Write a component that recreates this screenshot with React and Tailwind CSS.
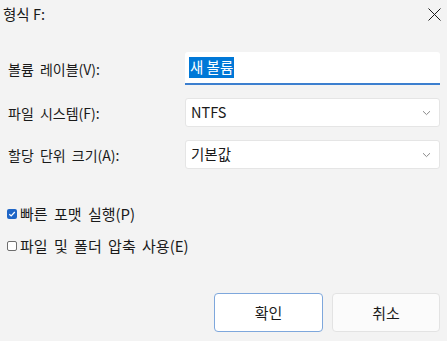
import React from 'react';

const font = { fontFamily: "'Noto Sans CJK KR', 'Noto Sans', sans-serif" };

// small chevron used by the combo boxes
const Chevron = () => (
  <svg width="9" height="6" viewBox="0 0 9 6" className="text-[#8a8a8a]">
    <path d="M1 1.2 L4.5 4.6 L8 1.2" fill="none" stroke="currentColor" strokeWidth="1" />
  </svg>
);

const Combo = ({ value }) => (
  <div className="flex h-[29px] w-[255px] items-center justify-between rounded-[3px] border border-[#e5e5e5] bg-white pl-[5px] pr-[8px] text-[14.5px] text-[#1a1a1a]">
    <span>{value}</span>
    <Chevron />
  </div>
);

const Row = ({ label, children }) => (
  <div className="flex items-center">
    <div className="w-[177px] text-[#1a1a1a] [word-spacing:3px]">{label}</div>
    {children}
  </div>
);

const Checkbox = ({ checked, label }) => (
  <div className="flex items-center gap-[3px] text-[15px] text-[#1a1a1a] [word-spacing:3px]">
    {checked ? (
      <span className="flex h-[10px] w-[10px] items-center justify-center rounded-[2px] bg-[#1f66c7]">
        <svg width="8" height="8" viewBox="0 0 8 8">
          <path d="M1.3 4.2 L3.2 6 L6.8 2" fill="none" stroke="white" strokeWidth="1.2" />
        </svg>
      </span>
    ) : (
      <span className="h-[10px] w-[10px] rounded-[2px] border border-[#6e6e6e] bg-white" />
    )}
    <span>{label}</span>
  </div>
);

export default function App() {
  return (
    <div className="flex h-[341px] w-[447px] flex-col bg-[#f3f3f3] text-[14px] leading-none" style={font}>
      {/* title bar */}
      <div className="flex h-[29px] items-center justify-between pl-[3px] pr-[6px] text-[14.5px] text-[#1a1a1a]">
        <span>형식 F:</span>
        <svg width="13" height="13" viewBox="0 0 13 13">
          <path d="M0.5 0.5 L12.5 12.5 M12.5 0.5 L0.5 12.5" stroke="#1a1a1a" strokeWidth="1" />
        </svg>
      </div>

      <div className="flex flex-col gap-[13px] pl-[8px] pt-[23px]">
        <Row label="볼륨 레이블(V):">
          <div className="flex h-[33px] w-[255px] items-center rounded-t-[3px] border-b-2 border-[#3c7fcf] bg-white pl-[4px]">
            <span className="bg-[#0078d7] px-[1px] py-[3px] text-[14.5px] text-white">새 볼륨</span>
          </div>
        </Row>
        <Row label="파일 시스템(F):">
          <Combo value="NTFS" />
        </Row>
        <Row label="할당 단위 크기(A):">
          <Combo value="기본값" />
        </Row>
      </div>

      <div className="flex flex-col gap-[17px] pl-[7px] pt-[37px]">
        <Checkbox checked label="빠른 포맷 실행(P)" />
        <Checkbox label="파일 및 폴더 압축 사용(E)" />
      </div>

      <div className="mt-auto flex justify-end gap-[9px] pb-[9px] pr-[7px]">
        <button className="h-[39px] w-[109px] rounded-[4px] border border-[#7ea7dc] bg-white text-[15px] text-[#1a1a1a]">확인</button>
        <button className="h-[39px] w-[108px] rounded-[4px] border border-[#e3e3e3] bg-[#fbfbfb] text-[15px] text-[#1a1a1a]">취소</button>
      </div>
    </div>
  );
}
